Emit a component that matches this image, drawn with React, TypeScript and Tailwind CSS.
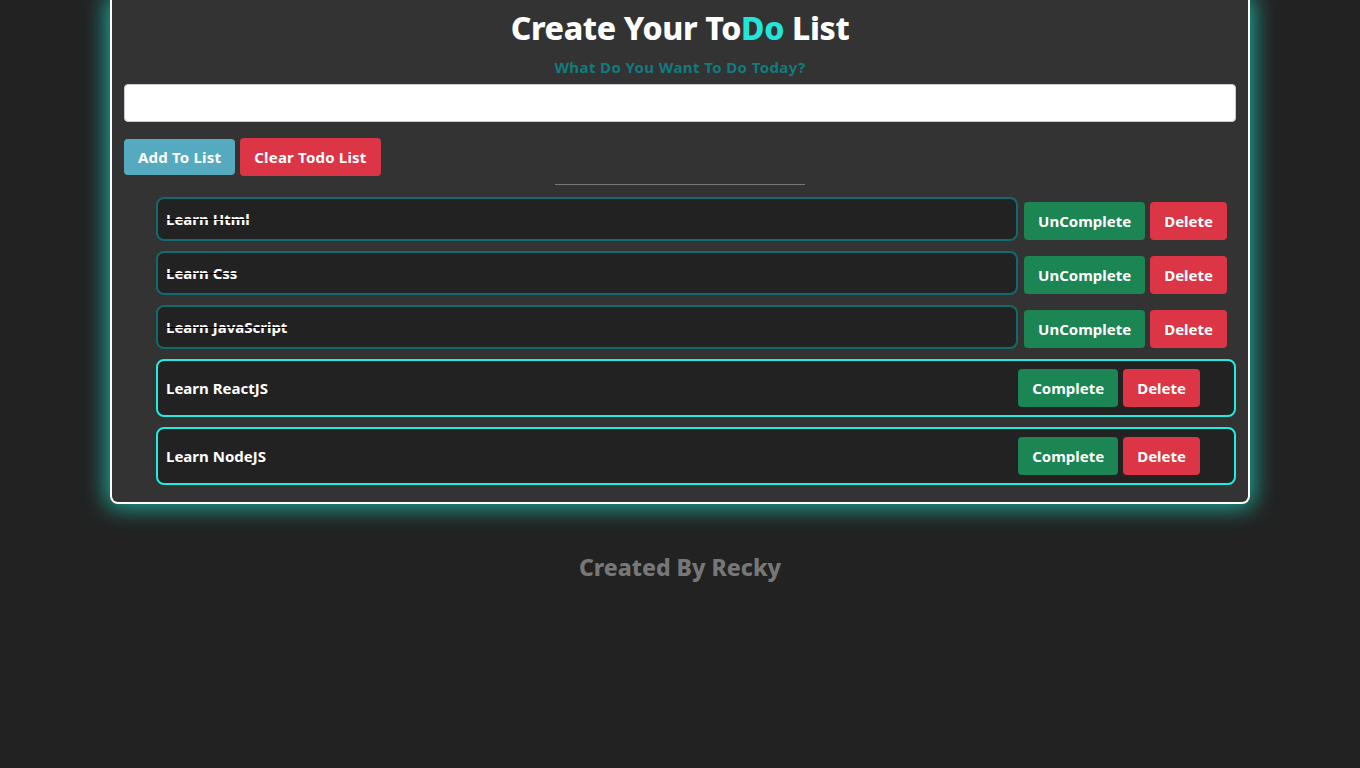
import React from 'react';

const todos = [
  { text: 'Learn Html', done: true },
  { text: 'Learn Css', done: true },
  { text: 'Learn JavaScript', done: true },
  { text: 'Learn ReactJS', done: false },
  { text: 'Learn NodeJS', done: false },
];

const font = { fontFamily: '"Noto Sans", "Open Sans", sans-serif' };

const App = () => {
  return (
    <div className="min-h-[768px] bg-[#222222] font-bold" style={font}>
      <div className="mx-auto w-[1140px] rounded-b-lg border-x-2 border-b-2 border-white bg-[#333333] px-3 pb-[17px] pt-[6px] shadow-[0_0_22px_4px_#1fa89a]">
        <h1 className="text-center text-[32px] leading-[44px] font-extrabold tracking-[-0.35px] text-white">
          Create Your To<span className="text-[#22e6da]">Do</span> List
        </h1>
        <p className="mt-[6px] text-center text-[15px] leading-[22px] tracking-[0.4px] text-[#137a7d]">What Do You Want To Do Today?</p>
        <input className="mt-[6px] block h-[38px] w-full rounded border border-[#c8ccd4] bg-white px-3" />
        <div className="mt-4 flex items-center gap-[5px]">
          <button className="h-[36px] rounded bg-[#56aabf] px-[14px] text-[15px] tracking-[0.2px] text-white">Add To List</button>
          <button className="h-[38px] rounded bg-[#dc3545] px-[14px] text-[15px] tracking-[0.2px] text-white">Clear Todo List</button>
        </div>
        <hr className="mx-auto mt-2 w-[250px] border-t border-[#777777]" />
        <ul className="mt-3 flex flex-col gap-[10px] pl-8">
          {todos.map((t) =>
            t.done ? (
              <li key={t.text} className="flex items-center">
                <div className="flex h-[44px] flex-1 items-center rounded-lg border-2 border-[#12696f] bg-[#222222] px-2">
                  <span className="text-[15px] text-white line-through decoration-black">{t.text}</span>
                </div>
                <div className="ml-[6px] mr-[9px] mt-[4px] flex gap-[5px]">
                  <button className="h-[38px] rounded bg-[#1b8553] px-[14px] text-[15px] text-white">UnComplete</button>
                  <button className="h-[38px] rounded bg-[#dc3545] px-[14px] text-[15px] text-white">Delete</button>
                </div>
              </li>
            ) : (
              <li key={t.text} className="flex h-[58px] items-center rounded-lg border-2 border-[#22ece0] bg-[#222222] pl-2 pr-[34px]">
                <span className="flex-1 text-[15px] text-white">{t.text}</span>
                <div className="flex gap-[5px]">
                  <button className="h-[38px] rounded bg-[#1b8553] px-[14px] text-[15px] text-white">Complete</button>
                  <button className="h-[38px] rounded bg-[#dc3545] px-[14px] text-[15px] text-white">Delete</button>
                </div>
              </li>
            )
          )}
        </ul>
      </div>
      <p className="mt-[46px] text-center text-[23px] font-extrabold text-[#777777]">Created By Recky</p>
    </div>
  );
};

export default App;
